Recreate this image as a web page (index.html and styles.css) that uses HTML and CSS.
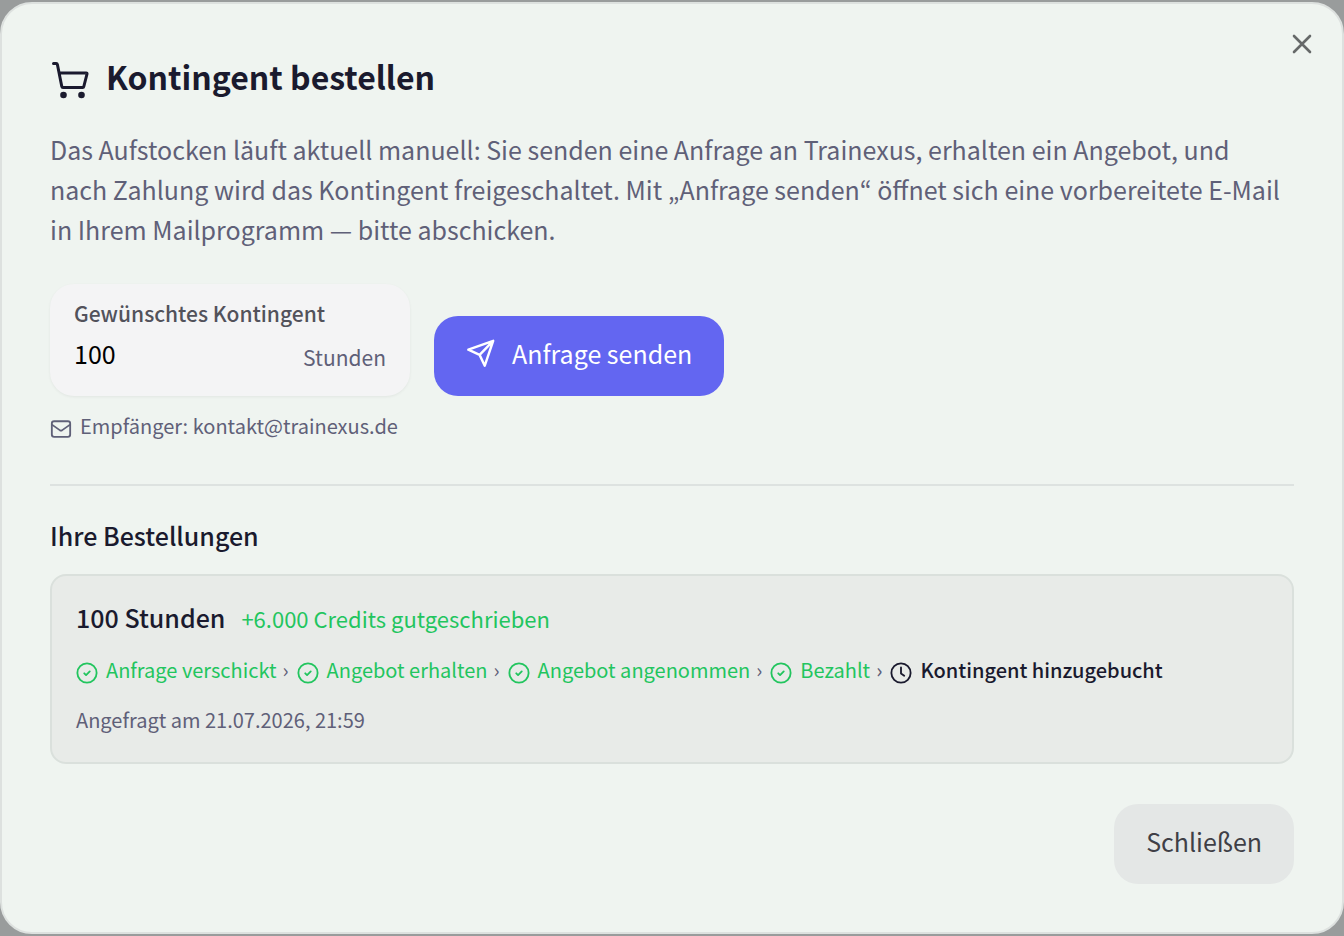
FILE: index.html
```html
<!DOCTYPE html>
<html lang="de">
<head>
  <meta charset="UTF-8">
  <meta name="viewport" content="width=device-width, initial-scale=1">
  <title>Kontingent bestellen</title>

  <link rel="stylesheet" href="styles.css">
</head>
<body>
  <!-- shared icons -->
  <svg class="icon-defs" aria-hidden="true">
    <symbol id="icon-check" viewBox="0 0 24 24">
      <circle cx="12" cy="12" r="10.5"/>
      <path d="M9 12.3l2 2 4-4"/>
    </symbol>
  </svg>

  <main class="modal" role="dialog" aria-labelledby="modalTitle">
    <button type="button" class="modal-close" aria-label="Dialog schließen">
      <svg viewBox="0 0 24 24"><path d="M4 4l16 16M20 4L4 20"/></svg>
    </button>

    <h1 class="modal-title" id="modalTitle">
      <svg class="icon-cart" viewBox="0 1 40 40">
        <path d="M3.500 4.500h2.700q1 0 1.200 1l4.400 22q.2 1 1.200 1h19.600q1 0 1.200-1L37 15q.2-1-.8-1H9.200"/>
        <circle class="wheel" cx="13.500" cy="36" r="3.300"/>
        <circle class="wheel" cx="31.500" cy="36" r="3.300"/>
      </svg>
      Kontingent bestellen
    </h1>

    <p class="intro">Das Aufstocken läuft aktuell manuell: Sie senden eine Anfrage an Trainexus, erhalten ein Angebot, und nach Zahlung wird das Kontingent freigeschaltet. Mit „Anfrage senden“ öffnet sich eine vorbereitete E-Mail in Ihrem Mailprogramm — bitte abschicken.</p>

    <form class="order-form">
      <div class="field">
        <label for="quota">Gewünschtes Kontingent</label>
        <div class="field-row">
          <input type="text" id="quota" inputmode="numeric" value="100">
          <span class="unit">Stunden</span>
        </div>
      </div>
      <button type="submit" class="btn btn-primary">
        <svg class="icon-send" viewBox="0 0 32 32"><path d="M29 3L2.500 12.500l12 5.500L20 29.500zM29 3L14.500 18"/></svg>
        Anfrage senden
      </button>
    </form>

    <p class="recipient">
      <svg class="icon-small" viewBox="0 0 24 24"><rect x="2" y="3.500" width="20" height="17" rx="2.500"/><path d="M2.500 7.500l8.500 6q1 .6 2 0l8.500-6"/></svg>
      Empfänger: kontakt@trainexus.de
    </p>

    <section class="orders">
      <h2>Ihre Bestellungen</h2>

      <article class="order">
        <div class="order-head">
          <strong>100 Stunden</strong>
          <span class="credits">+6.000 Credits gutgeschrieben</span>
        </div>
        <ol class="steps">
          <li class="done"><svg class="icon-small"><use href="#icon-check"/></svg>Anfrage verschickt</li>
          <li class="done"><svg class="icon-small"><use href="#icon-check"/></svg>Angebot erhalten</li>
          <li class="done"><svg class="icon-small"><use href="#icon-check"/></svg>Angebot angenommen</li>
          <li class="done"><svg class="icon-small"><use href="#icon-check"/></svg>Bezahlt</li>
          <li class="current"><svg class="icon-small" viewBox="0 0 24 24"><circle cx="12" cy="12" r="10.500"/><path d="M12 6v6.500l3.500 2.500"/></svg>Kontingent hinzugebucht</li>
        </ol>
        <p class="order-date">Angefragt am 21.07.2026, 21:59</p>
      </article>
    </section>

    <div class="modal-footer">
      <button type="button" class="btn btn-secondary">Schließen</button>
    </div>
  </main>
</body>
</html>
```

FILE: styles.css
```css
* {
  box-sizing: border-box;
}

body {
  margin: 0;
  padding: 2px 0;
  min-height: 100vh;
  background-color: #999c9c;
  font-family: "Noto Sans CJK KR", "Noto Sans", sans-serif;
  font-size: 25px;
  line-height: 40px;
  color: #1a1a2e;
}

h1,
h2,
p,
ol {
  margin: 0;
  padding: 0;
}

svg {
  flex: none;
  fill: none;
  stroke: currentColor;
  stroke-width: 2;
  stroke-linecap: round;
  stroke-linejoin: round;
}

button,
input {
  font: inherit;
  border: none;
}

button {
  cursor: pointer;
}

.icon-defs {
  display: none;
}

.modal {
  position: relative;
  padding: 48px;
  border: 2px solid #dde1df;
  border-radius: 32px;
  background-color: #eff4f0;
}

.modal-close {
  position: absolute;
  top: 28px;
  right: 28px;
  display: flex;
  padding: 0;
  background: none;
  color: #666969;
}

.modal-close svg {
  width: 24px;
  height: 24px;
  stroke-width: 2.6;
}

.modal-title {
  display: flex;
  align-items: flex-end;
  gap: 16px;
  margin-bottom: 29px;
  font-size: 32px;
  line-height: 48px;
  font-weight: 700;
}

.icon-cart {
  width: 40px;
  height: 40px;
  stroke-width: 3;
}

.wheel {
  fill: currentColor;
  stroke: none;
}

.intro {
  margin-bottom: 35px;
  padding-right: 8px;
  color: #5f6078;
}

.order-form {
  display: flex;
  align-items: flex-end;
  gap: 24px;
}

.field {
  width: 360px;
  padding: 13px 24px 17px;
  border-radius: 24px;
  background-color: #f4f4f5;
  box-shadow: 0 1px 3px rgba(0, 0, 0, 0.06);
}

.field label {
  display: block;
  font-size: 21px;
  line-height: 32px;
  font-weight: 500;
  color: #52525b;
}

.field-row {
  display: flex;
  align-items: flex-end;
  gap: 8px;
}

.field input {
  flex: 1;
  min-width: 0;
  padding: 0 0 2px;
  height: 50px;
  background: none;
  color: #000;
  outline: none;
}

.unit {
  font-size: 21px;
  line-height: 44px;
  color: #5f6078;
}

.btn {
  display: flex;
  align-items: center;
  gap: 16px;
  height: 80px;
  padding: 0 32px 6px;
  border-radius: 24px;
}

.btn-primary {
  background-color: #6366f1;
  color: #fff;
}

.icon-send {
  width: 30px;
  height: 30px;
  stroke-width: 2.6;
}

.btn-secondary {
  background-color: #e4e7e6;
  color: #3f3f46;
}

.icon-small {
  width: 22px;
  height: 22px;
}

.recipient {
  display: flex;
  align-items: flex-end;
  gap: 8px;
  margin-top: 16px;
  font-size: 20px;
  line-height: 28px;
  color: #5f6078;
}

.orders {
  margin-top: 44px;
  padding-top: 29px;
  border-top: 2px solid #dde2e0;
}

.orders h2 {
  margin-bottom: 19px;
  font-size: 25px;
  line-height: 40px;
  font-weight: 500;
}

.order {
  padding: 21px 24px 26px;
  border: 2px solid #dae0dc;
  border-radius: 16px;
  background-color: #e8ebe8;
}

.order-head {
  display: flex;
  align-items: baseline;
  gap: 16px;
}

.order-head strong {
  font-weight: 500;
}

.credits {
  font-size: 22px;
  color: #22c55e;
}

.steps {
  display: flex;
  flex-wrap: wrap;
  gap: 6px;
  margin: 18px 0 20px;
  font-size: 20px;
  line-height: 28px;
  list-style: none;
}

.steps li {
  display: flex;
  align-items: flex-end;
  gap: 8px;
}

.steps li + li::before {
  content: "›";
  color: #5f6078;
}

.steps .done {
  color: #22c55e;
}

.steps .current {
  font-weight: 500;
}

.order-date {
  font-size: 20px;
  line-height: 32px;
  color: #5f6078;
}

.modal-footer {
  display: flex;
  justify-content: flex-end;
  margin-top: 40px;
}
```
